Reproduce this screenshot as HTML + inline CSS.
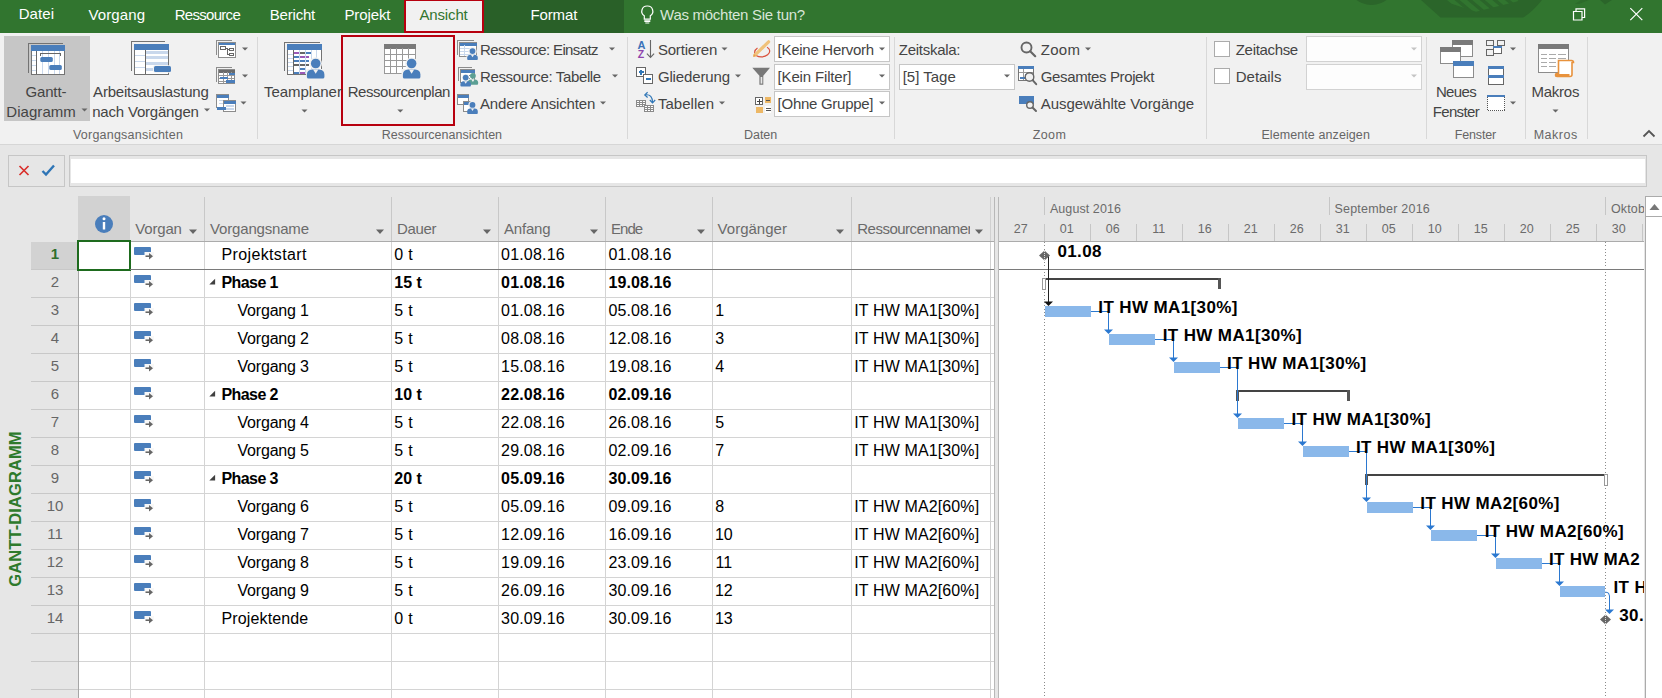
<!DOCTYPE html><html lang="de"><head><meta charset="utf-8"><title>Project</title><style>
html,body{margin:0;padding:0}
body{width:1662px;height:698px;overflow:hidden;position:relative;background:#e6e6e6;font-family:"Liberation Sans",sans-serif}
.a{position:absolute}
.t{position:absolute;white-space:nowrap;line-height:20px;height:20px;font-family:"Liberation Sans",sans-serif;}
.sep{position:absolute;top:37px;height:102px;width:1px;background:#d8d8d8}
.cb{position:absolute;height:24px;background:#fff;border:1px solid #c6c6c6}
.vl{position:absolute;width:1px;background:#d4d4d4}
.hl{position:absolute;height:1px;background:#d4d4d4}
</style></head><body>
<div class="a" style="left:0;top:0;width:1662px;height:33px;background:#31752f"></div>
<div class="a" style="left:484px;top:0;width:140px;height:33px;background:#296028"></div>
<div class="a" style="left:404px;top:-1px;width:76px;height:30px;background:#f1f1f1;border:2px solid #b7000f"></div>
<div class="a" style="left:0;top:33px;width:1662px;height:111px;background:#f1f1f1"></div>
<div class="a" style="left:0;top:144px;width:1662px;height:1px;background:#d6d6d6"></div>
<div class="a" style="left:4px;top:36px;width:86px;height:85px;background:#c6c6c6"></div>
<div class="sep" style="left:257px"></div>
<div class="sep" style="left:627px"></div>
<div class="sep" style="left:894px"></div>
<div class="sep" style="left:1206px"></div>
<div class="sep" style="left:1426px"></div>
<div class="sep" style="left:1525px"></div>
<div class="sep" style="left:1587px"></div>
<div class="a" style="left:341px;top:35px;width:110px;height:87px;border:2px solid #b7000f;background:#f1f1f1"></div>
<div class="cb" style="left:774px;top:36px;width:114px"></div>
<div class="cb" style="left:774px;top:64px;width:114px"></div>
<div class="cb" style="left:774px;top:91px;width:114px"></div>
<div class="cb" style="left:899px;top:64px;width:114px"></div>
<div class="cb" style="left:1306px;top:36px;width:114px;background:#fdfdfd;border-color:#d2d2d2"></div>
<div class="cb" style="left:1306px;top:64px;width:114px;background:#fdfdfd;border-color:#d2d2d2"></div>
<div class="a" style="left:1214px;top:41px;width:14px;height:14px;background:#fff;border:1px solid #ababab"></div>
<div class="a" style="left:1214px;top:68px;width:14px;height:14px;background:#fff;border:1px solid #ababab"></div>
<div class="a" style="left:8px;top:155px;width:55px;height:30px;border:1px solid #c6c6c6"></div>
<div class="a" style="left:69px;top:155px;width:1576px;height:30px;border:1px solid #c6c6c6"><div class="a" style="left:1px;top:3px;right:1px;bottom:3px;background:#fff"></div></div>
<div class="a" style="left:78px;top:242px;width:916px;height:456px;background:#fff"></div>
<div class="a" style="left:999px;top:242px;width:645px;height:456px;background:#fff"></div>
<div class="a" style="left:78px;top:196px;width:52px;height:45px;background:#d2d2d2"></div>
<div class="a" style="left:31px;top:242px;width:47px;height:27px;background:#d2d2d2"></div>
<div class="hl" style="left:31px;top:269px;width:47px;background:#c8c8c8"></div><div class="hl" style="left:78px;top:269px;width:916px"></div>
<div class="hl" style="left:31px;top:297px;width:47px;background:#c8c8c8"></div><div class="hl" style="left:78px;top:297px;width:916px"></div>
<div class="hl" style="left:31px;top:325px;width:47px;background:#c8c8c8"></div><div class="hl" style="left:78px;top:325px;width:916px"></div>
<div class="hl" style="left:31px;top:353px;width:47px;background:#c8c8c8"></div><div class="hl" style="left:78px;top:353px;width:916px"></div>
<div class="hl" style="left:31px;top:381px;width:47px;background:#c8c8c8"></div><div class="hl" style="left:78px;top:381px;width:916px"></div>
<div class="hl" style="left:31px;top:409px;width:47px;background:#c8c8c8"></div><div class="hl" style="left:78px;top:409px;width:916px"></div>
<div class="hl" style="left:31px;top:437px;width:47px;background:#c8c8c8"></div><div class="hl" style="left:78px;top:437px;width:916px"></div>
<div class="hl" style="left:31px;top:465px;width:47px;background:#c8c8c8"></div><div class="hl" style="left:78px;top:465px;width:916px"></div>
<div class="hl" style="left:31px;top:493px;width:47px;background:#c8c8c8"></div><div class="hl" style="left:78px;top:493px;width:916px"></div>
<div class="hl" style="left:31px;top:521px;width:47px;background:#c8c8c8"></div><div class="hl" style="left:78px;top:521px;width:916px"></div>
<div class="hl" style="left:31px;top:549px;width:47px;background:#c8c8c8"></div><div class="hl" style="left:78px;top:549px;width:916px"></div>
<div class="hl" style="left:31px;top:577px;width:47px;background:#c8c8c8"></div><div class="hl" style="left:78px;top:577px;width:916px"></div>
<div class="hl" style="left:31px;top:605px;width:47px;background:#c8c8c8"></div><div class="hl" style="left:78px;top:605px;width:916px"></div>
<div class="hl" style="left:31px;top:633px;width:47px;background:#c8c8c8"></div><div class="hl" style="left:78px;top:633px;width:916px"></div>
<div class="hl" style="left:31px;top:661px;width:47px;background:#c8c8c8"></div><div class="hl" style="left:78px;top:661px;width:916px"></div>
<div class="hl" style="left:31px;top:689px;width:47px;background:#c8c8c8"></div><div class="hl" style="left:78px;top:689px;width:916px"></div>
<div class="vl" style="left:130px;top:242px;height:456px"></div>
<div class="vl" style="left:204px;top:197px;height:44px;background:#c8c8c8"></div>
<div class="vl" style="left:204px;top:242px;height:456px"></div>
<div class="vl" style="left:391px;top:197px;height:44px;background:#c8c8c8"></div>
<div class="vl" style="left:391px;top:242px;height:456px"></div>
<div class="vl" style="left:498px;top:197px;height:44px;background:#c8c8c8"></div>
<div class="vl" style="left:498px;top:242px;height:456px"></div>
<div class="vl" style="left:605px;top:197px;height:44px;background:#c8c8c8"></div>
<div class="vl" style="left:605px;top:242px;height:456px"></div>
<div class="vl" style="left:712px;top:197px;height:44px;background:#c8c8c8"></div>
<div class="vl" style="left:712px;top:242px;height:456px"></div>
<div class="vl" style="left:851px;top:197px;height:44px;background:#c8c8c8"></div>
<div class="vl" style="left:851px;top:242px;height:456px"></div>
<div class="vl" style="left:78px;top:241px;height:457px;background:#a6a6a6"></div>
<div class="vl" style="left:990px;top:197px;height:501px;background:#d0d0d0"></div>
<div class="a" style="left:994px;top:197px;width:3px;height:501px;background:#e6e6e6;border-left:1px solid #b8b8b8;border-right:1px solid #b8b8b8"></div>
<div class="hl" style="left:78px;top:241px;width:916px;background:#ababab"></div><div class="hl" style="left:999px;top:241px;width:645px;background:#ababab"></div>
<div class="vl" style="left:1044px;top:197px;height:18px;background:#c6c6c6"></div>
<div class="vl" style="left:1329px;top:197px;height:18px;background:#c6c6c6"></div>
<div class="vl" style="left:1605px;top:197px;height:18px;background:#c6c6c6"></div>
<div class="vl" style="left:1044px;top:224px;height:17px;background:#c6c6c6"></div>
<div class="vl" style="left:1090px;top:224px;height:17px;background:#c6c6c6"></div>
<div class="vl" style="left:1136px;top:224px;height:17px;background:#c6c6c6"></div>
<div class="vl" style="left:1182px;top:224px;height:17px;background:#c6c6c6"></div>
<div class="vl" style="left:1228px;top:224px;height:17px;background:#c6c6c6"></div>
<div class="vl" style="left:1274px;top:224px;height:17px;background:#c6c6c6"></div>
<div class="vl" style="left:1320px;top:224px;height:17px;background:#c6c6c6"></div>
<div class="vl" style="left:1366px;top:224px;height:17px;background:#c6c6c6"></div>
<div class="vl" style="left:1412px;top:224px;height:17px;background:#c6c6c6"></div>
<div class="vl" style="left:1458px;top:224px;height:17px;background:#c6c6c6"></div>
<div class="vl" style="left:1504px;top:224px;height:17px;background:#c6c6c6"></div>
<div class="vl" style="left:1550px;top:224px;height:17px;background:#c6c6c6"></div>
<div class="vl" style="left:1596px;top:224px;height:17px;background:#c6c6c6"></div>
<div class="vl" style="left:1642px;top:224px;height:17px;background:#c6c6c6"></div>
<div class="a" style="left:1645px;top:197px;width:17px;height:501px;background:#fff;border-left:1px solid #ababab"></div>
<div class="a" style="left:1645px;top:196px;width:17px;height:19px;background:#fff;border:1px solid #ababab;border-right:0"></div>
<div class="a" style="left:77px;top:240px;width:50px;height:27px;border:2px solid #1e6b1e;background:#fff"></div>
<div class="a" style="left:15px;top:509px;width:0;height:0"><div id="vlab" style="position:absolute;white-space:nowrap;transform:translate(-50%,-50%) rotate(-90deg);font-size:16.5px;font-weight:700;color:#2e7a2c;letter-spacing:0.1px;line-height:16px">GANTT-DIAGRAMM</div></div>
<svg class="a" style="left:0;top:0" width="1662" height="698" viewBox="0 0 1662 698">
<path d="M1421,0 L1440.5,17.5 h82.5 q9,-5 19,-17.5 z" fill="#2b652a"/><circle cx="1371.5" cy="-20" r="25" fill="#2b652a"/><clipPath id="dc"><path d="M1440,0 L1476,11.8 L1517,1.6 L1520,0 z"/></clipPath><g clip-path="url(#dc)"><path d="M1447.0,0 h7.5 l14.2,12 h-7.5 z" fill="#31752f"/><path d="M1459.6,0 h7.5 l14.2,12 h-7.5 z" fill="#31752f"/><path d="M1472.2,0 h7.5 l14.2,12 h-7.5 z" fill="#31752f"/><path d="M1484.8,0 h7.5 l14.2,12 h-7.5 z" fill="#31752f"/><path d="M1497.4,0 h7.5 l14.2,12 h-7.5 z" fill="#31752f"/><path d="M1510.0,0 h7.5 l14.2,12 h-7.5 z" fill="#31752f"/></g><path d="M1600,0 h12 l-7,4.5 z" fill="#2b652a"/><path d="M1581,0 h8 l-10,4 h-4z" fill="#2d6b2b"/>
<g shape-rendering="crispEdges">
<line x1="28.5" y1="43" x2="28.5" y2="73" stroke="#737373" stroke-width="1" /><line x1="28" y1="43.5" x2="63" y2="43.5" stroke="#737373" stroke-width="1" />
<rect x="31.5" y="45.5" width="33" height="29" fill="#fff" stroke="#737373"/>
<rect x="31" y="45" width="34" height="6" fill="#4a7ebb" />
<line x1="32" y1="55.5" x2="36" y2="55.5" stroke="#c9d8ec" stroke-width="1" />
<line x1="32" y1="60.5" x2="36" y2="60.5" stroke="#c9d8ec" stroke-width="1" />
<line x1="32" y1="65.5" x2="36" y2="65.5" stroke="#c9d8ec" stroke-width="1" />
<line x1="32" y1="70.5" x2="36" y2="70.5" stroke="#c9d8ec" stroke-width="1" />
<line x1="42.5" y1="51" x2="42.5" y2="74" stroke="#c9d8ec" stroke-width="1" />
<line x1="48.5" y1="51" x2="48.5" y2="74" stroke="#c9d8ec" stroke-width="1" />
<line x1="54.5" y1="51" x2="54.5" y2="74" stroke="#c9d8ec" stroke-width="1" />
<line x1="59.5" y1="51" x2="59.5" y2="74" stroke="#c9d8ec" stroke-width="1" />
<line x1="36.5" y1="51" x2="36.5" y2="74" stroke="#666" stroke-width="1" />
<path d="M40.5,55.5 v-2 h20 v2" fill="none" stroke="#666"/>
</g>
<rect x="40.3" y="57" width="12.5" height="5" fill="#4a7ebb" rx="1.5"/><rect x="49.3" y="65" width="12.5" height="5" fill="#4a7ebb" rx="1.5"/>
<g shape-rendering="crispEdges">
<line x1="131.5" y1="41" x2="131.5" y2="71" stroke="#737373" stroke-width="1" /><line x1="131" y1="41.5" x2="165" y2="41.5" stroke="#737373" stroke-width="1" />
<rect x="134.5" y="44.5" width="34" height="30" fill="#fff" stroke="#737373"/>
<rect x="134" y="44" width="35" height="6" fill="#4a7ebb" />
<line x1="145.5" y1="50" x2="145.5" y2="74" stroke="#666" stroke-width="1" />
<line x1="135" y1="55.5" x2="145" y2="55.5" stroke="#c9d8ec" stroke-width="1" />
<line x1="135" y1="61.5" x2="145" y2="61.5" stroke="#c9d8ec" stroke-width="1" />
<line x1="135" y1="67.5" x2="145" y2="67.5" stroke="#c9d8ec" stroke-width="1" />
<rect x="146" y="50.5" width="22" height="3" fill="#c9d8ec" />
<rect x="146" y="56" width="22" height="3" fill="#c9d8ec" />
<rect x="146" y="62" width="22" height="3" fill="#c9d8ec" />
<rect x="146" y="68" width="7" height="3" fill="#c9d8ec" />
</g>
<rect x="153.2" y="65.2" width="18.4" height="7.6" fill="#f1f1f1" rx="2"/><rect x="154" y="66" width="17" height="6" fill="#4a7ebb" rx="1.5"/>
<g shape-rendering="crispEdges">
<line x1="216.5" y1="40" x2="216.5" y2="55" stroke="#8c8c8c" stroke-width="1" /><line x1="216" y1="40.5" x2="232" y2="40.5" stroke="#8c8c8c" stroke-width="1" />
<rect x="218.5" y="42.5" width="17" height="15" fill="#fff" stroke="#8c8c8c"/><rect x="219" y="43" width="16" height="2" fill="#4a7ebb" />
<rect x="220.5" y="46.5" width="5" height="3" fill="#fff" stroke="#666"/><rect x="229.5" y="48.5" width="4" height="2" fill="#fff" stroke="#666"/><rect x="229.5" y="53.5" width="4" height="2" fill="#fff" stroke="#666"/>
<path d="M225.5,48.5 h2 v6 h2 M227.5,49.5 h2" fill="none" stroke="#666"/>
<line x1="216.5" y1="67" x2="216.5" y2="82" stroke="#8c8c8c" stroke-width="1" /><line x1="216" y1="67.5" x2="232" y2="67.5" stroke="#8c8c8c" stroke-width="1" />
<rect x="218.5" y="69.5" width="16" height="14" fill="#fff" stroke="#8c8c8c"/><rect x="219" y="70" width="16" height="2.5" fill="#6a6a6a" />
<line x1="223.5" y1="72" x2="223.5" y2="83" stroke="#999" stroke-width="1" />
<line x1="227.5" y1="72" x2="227.5" y2="83" stroke="#999" stroke-width="1" />
<line x1="231.5" y1="72" x2="231.5" y2="83" stroke="#999" stroke-width="1" />
<line x1="219" y1="75.5" x2="234" y2="75.5" stroke="#999" stroke-width="1" />
<line x1="219" y1="78.5" x2="234" y2="78.5" stroke="#999" stroke-width="1" />
<line x1="219" y1="81.5" x2="234" y2="81.5" stroke="#999" stroke-width="1" />
<rect x="229" y="73" width="6" height="2" fill="#4a7ebb" /><rect x="220" y="77" width="8" height="2" fill="#4a7ebb" /><rect x="226" y="80" width="9" height="2.5" fill="#4a7ebb" />
<rect x="216.5" y="94.5" width="12" height="13" fill="#fff" stroke="#8c8c8c"/><rect x="217" y="95" width="12" height="2.5" fill="#4a7ebb" />
<line x1="219" y1="100.5" x2="227" y2="100.5" stroke="#c9d8ec" stroke-width="1" />
<line x1="219" y1="103.5" x2="227" y2="103.5" stroke="#c9d8ec" stroke-width="1" />
<rect x="223.5" y="100.5" width="12" height="11" fill="#fff" stroke="#8c8c8c"/><rect x="224" y="101" width="12" height="2.5" fill="#4a7ebb" />
<rect x="226" y="105" width="8" height="1.5" fill="#c9d8ec" /><rect x="226" y="108" width="8" height="1.5" fill="#c9d8ec" />
<rect x="217" y="107" width="8.5" height="3" fill="#4a7ebb" />
</g>
<path d="M242,47.5 h6 l-3.0,3 z" fill="#666"/><path d="M242,74.5 h6 l-3.0,3 z" fill="#666"/><path d="M240.5,101.5 h6 l-3.0,3 z" fill="#666"/>
<path d="M81.5,108.5 h6 l-3.0,3 z" fill="#666"/><path d="M204,108.5 h6 l-3.0,3 z" fill="#666"/><path d="M301.5,109.5 h6 l-3.0,3 z" fill="#666"/><path d="M397.3,109.5 h6 l-3.0,3 z" fill="#666"/><path d="M1552.5,109.5 h6 l-3.0,3 z" fill="#666"/>
<g shape-rendering="crispEdges">
<line x1="284.5" y1="42" x2="284.5" y2="71" stroke="#737373" stroke-width="1" /><line x1="284" y1="42.5" x2="320" y2="42.5" stroke="#737373" stroke-width="1" />
<rect x="287.5" y="44.5" width="34" height="30" fill="#fff" stroke="#737373"/><rect x="287" y="44" width="35" height="6" fill="#4a7ebb" />
<line x1="288" y1="54.5" x2="293" y2="54.5" stroke="#c9d8ec" stroke-width="1" />
<line x1="288" y1="58.5" x2="293" y2="58.5" stroke="#c9d8ec" stroke-width="1" />
<line x1="288" y1="62.5" x2="293" y2="62.5" stroke="#c9d8ec" stroke-width="1" />
<line x1="288" y1="66.5" x2="293" y2="66.5" stroke="#c9d8ec" stroke-width="1" />
<line x1="288" y1="70.5" x2="293" y2="70.5" stroke="#c9d8ec" stroke-width="1" />
<line x1="299.5" y1="50" x2="299.5" y2="74" stroke="#c9d8ec" stroke-width="1" />
<line x1="305.5" y1="50" x2="305.5" y2="74" stroke="#c9d8ec" stroke-width="1" />
<line x1="311.5" y1="50" x2="311.5" y2="74" stroke="#c9d8ec" stroke-width="1" />
<line x1="316.5" y1="50" x2="316.5" y2="74" stroke="#c9d8ec" stroke-width="1" />
<line x1="293.5" y1="50" x2="293.5" y2="74" stroke="#666" stroke-width="1" />
<rect x="294" y="52" width="5" height="2" fill="#9b59b6" /><rect x="300" y="52" width="5" height="2" fill="#666" /><rect x="306" y="52" width="5" height="2" fill="#4a7ebb" />
<rect x="294" y="56" width="5" height="2" fill="#4a7ebb" /><rect x="300" y="56" width="5" height="2" fill="#9b59b6" /><rect x="306" y="56" width="3" height="2" fill="#9b59b6" />
<rect x="294" y="60" width="5" height="2" fill="#4a7ebb" /><rect x="300" y="60" width="5" height="2" fill="#4a7ebb" /><rect x="306" y="60" width="3" height="2" fill="#4a7ebb" />
<rect x="294" y="64" width="5" height="2" fill="#666" /><rect x="300" y="64" width="5" height="2" fill="#666" /><rect x="306" y="64" width="3" height="2" fill="#666" />
<rect x="300" y="68" width="5" height="2" fill="#4a7ebb" />
<rect x="294" y="72" width="5" height="2" fill="#4a7ebb" /><rect x="300" y="72" width="5" height="2" fill="#9b59b6" />
</g>
<circle cx="315.7" cy="63.5" r="6.3" fill="#f1f1f1"/><rect x="306" y="69" width="19.5" height="10.5" fill="#f1f1f1" rx="2"/>
<path d="M306.9,76.9 Q306.9,78.5 308.6,78.5 H322.8 Q324.4,78.5 324.4,76.9 V74.5 Q324.4,70.1 319.2,69.5 H312.2 Q306.9,70.1 306.9,74.5 z" fill="#4a7ebb"/><path d="M313.1,69.5 L315.7,73.7 L318.3,69.5 z" fill="#f1f1f1"/><circle cx="315.7" cy="63.5" r="4.8" fill="#4a7ebb"/>
<g shape-rendering="crispEdges">
<rect x="384.5" y="44.5" width="31" height="28.5" fill="#fff" stroke="#999"/><rect x="384" y="44" width="32" height="4.5" fill="#7a7a7a" />
<line x1="390.5" y1="48" x2="390.5" y2="73" stroke="#999" stroke-width="1" />
<line x1="396.5" y1="48" x2="396.5" y2="73" stroke="#999" stroke-width="1" />
<line x1="402.5" y1="48" x2="402.5" y2="73" stroke="#999" stroke-width="1" />
<line x1="408.5" y1="48" x2="408.5" y2="73" stroke="#999" stroke-width="1" />
<line x1="384" y1="54.5" x2="415" y2="54.5" stroke="#999" stroke-width="1" />
<line x1="384" y1="60.5" x2="415" y2="60.5" stroke="#999" stroke-width="1" />
<line x1="384" y1="66.5" x2="415" y2="66.5" stroke="#999" stroke-width="1" />
</g>
<circle cx="411.6" cy="64" r="6.5" fill="#f1f1f1"/><rect x="401.5" y="69" width="20" height="10" fill="#f1f1f1" />
<path d="M402.9,76.9 Q402.9,78.5 404.5,78.5 H418.8 Q420.4,78.5 420.4,76.9 V74.5 Q420.4,70.1 415.1,69.5 H408.1 Q402.9,70.1 402.9,74.5 z" fill="#4a7ebb"/><path d="M409.0,69.5 L411.6,73.7 L414.2,69.5 z" fill="#f1f1f1"/><circle cx="411.6" cy="63.5" r="4.8" fill="#4a7ebb"/>
<g shape-rendering="crispEdges">
<line x1="457.5" y1="40" x2="457.5" y2="55" stroke="#8c8c8c" stroke-width="1" /><line x1="457" y1="40.5" x2="474" y2="40.5" stroke="#8c8c8c" stroke-width="1" />
<rect x="459.5" y="42.5" width="17" height="14" fill="#fff" stroke="#8c8c8c"/><rect x="460" y="43" width="17" height="2.5" fill="#4a7ebb" />
<line x1="464.5" y1="45" x2="464.5" y2="56" stroke="#c9d8ec" stroke-width="1" />
<line x1="460" y1="48.5" x2="470" y2="48.5" stroke="#c9d8ec" stroke-width="1" />
<line x1="460" y1="51.5" x2="470" y2="51.5" stroke="#c9d8ec" stroke-width="1" />
<line x1="460" y1="54.5" x2="470" y2="54.5" stroke="#c9d8ec" stroke-width="1" />
</g>
<circle cx="472.5" cy="51.5" r="4.2" fill="#f1f1f1"/><rect x="466.5" y="55" width="12" height="5" fill="#f1f1f1" />
<path d="M467.2,59.1 Q467.2,60.1 468.2,60.1 H476.8 Q477.8,60.1 477.8,59.1 V57.7 Q477.8,55.0 474.6,54.7 H470.4 Q467.2,55.0 467.2,57.7 z" fill="#4a7ebb"/><path d="M470.9,54.7 L472.5,57.2 L474.1,54.7 z" fill="#f1f1f1"/><circle cx="472.5" cy="51.1" r="2.9" fill="#4a7ebb"/>
<g shape-rendering="crispEdges">
<line x1="458.5" y1="67" x2="458.5" y2="81" stroke="#8c8c8c" stroke-width="1" /><line x1="458" y1="67.5" x2="472" y2="67.5" stroke="#8c8c8c" stroke-width="1" />
<rect x="460.5" y="69.5" width="14" height="13" fill="#fff" stroke="#8c8c8c"/><rect x="461" y="70" width="14" height="2.5" fill="#4a7ebb" />
<rect x="463" y="75" width="1" height="1" fill="#888" />
<rect x="463" y="78" width="1" height="1" fill="#888" />
<rect x="466" y="75" width="1" height="1" fill="#888" />
<rect x="466" y="78" width="1" height="1" fill="#888" />
<rect x="469" y="75" width="1" height="1" fill="#888" />
<rect x="469" y="78" width="1" height="1" fill="#888" />
<rect x="472" y="75" width="1" height="1" fill="#888" />
<rect x="472" y="78" width="1" height="1" fill="#888" />
</g>
<path d="M467.6,83.8 Q467.6,84.8 468.6,84.8 H477.2 Q478.1,84.8 478.1,83.8 V82.3 Q478.1,79.7 475.0,79.4 H470.8 Q467.6,79.7 467.6,82.3 z" fill="#5b9f94"/><path d="M471.3,79.4 L472.9,81.9 L474.5,79.4 z" fill="#f1f1f1"/><circle cx="472.9" cy="75.8" r="2.9" fill="#5b9f94"/>
<circle cx="465.7" cy="77.6" r="3.6" fill="#f1f1f1"/>
<path d="M460.4,85.6 Q460.4,86.6 461.4,86.6 H470.0 Q470.9,86.6 470.9,85.6 V84.1 Q470.9,81.5 467.8,81.2 H463.6 Q460.4,81.5 460.4,84.1 z" fill="#4a7ebb"/><path d="M464.1,81.2 L465.7,83.7 L467.3,81.2 z" fill="#f1f1f1"/><circle cx="465.7" cy="77.6" r="2.9" fill="#4a7ebb"/>
<g shape-rendering="crispEdges">
<rect x="457.5" y="94.5" width="11" height="10" fill="#fff" stroke="#8c8c8c"/><rect x="458" y="95" width="11" height="2.5" fill="#4a7ebb" />
<rect x="463.5" y="101.5" width="10" height="10" fill="#fff" stroke="#8c8c8c"/><rect x="464" y="102" width="10" height="2.5" fill="#4a7ebb" />
</g>
<circle cx="472.5" cy="105" r="4.2" fill="#f1f1f1"/>
<path d="M467.2,112.9 Q467.2,113.9 468.2,113.9 H476.8 Q477.8,113.9 477.8,112.9 V111.4 Q477.8,108.8 474.6,108.5 H470.4 Q467.2,108.8 467.2,111.4 z" fill="#4a7ebb"/><path d="M470.9,108.5 L472.5,111.0 L474.1,108.5 z" fill="#f1f1f1"/><circle cx="472.5" cy="104.9" r="2.9" fill="#4a7ebb"/>
<path d="M609,47.5 h6 l-3.0,3 z" fill="#666"/><path d="M612,74.5 h6 l-3.0,3 z" fill="#666"/><path d="M600,101.5 h6 l-3.0,3 z" fill="#666"/>
<text x="637.4" y="48.7" font-family="Liberation Sans,sans-serif" font-size="11" font-weight="700" fill="#3b73b9">A</text>
<text x="637.8" y="57.8" font-family="Liberation Sans,sans-serif" font-size="10.5" font-weight="700" fill="#8e44ad">Z</text>
<path d="M650.5,40 v17 M646.9,53.6 l3.6,3.8 l3.6,-3.8" fill="none" stroke="#666" stroke-width="1.1"/>
<g shape-rendering="crispEdges">
<rect x="636.5" y="67.5" width="9" height="9" fill="#fff" stroke="#666"/><rect x="638.5" y="71.2" width="5" height="1.8" fill="#2e75b6" /><rect x="640.1" y="69.5" width="1.8" height="5" fill="#2e75b6" />
<rect x="643.5" y="74.5" width="9" height="9" fill="#fff" stroke="#666"/><rect x="645.5" y="78.3" width="5.5" height="1.8" fill="#2e75b6" />
<rect x="636.5" y="100.5" width="9" height="6" fill="#fff" stroke="#8a8a8a"/><line x1="636" y1="102.5" x2="646" y2="102.5" stroke="#8a8a8a" stroke-width="1" /><line x1="636" y1="104.5" x2="646" y2="104.5" stroke="#8a8a8a" stroke-width="1" /><line x1="639.5" y1="100" x2="639.5" y2="107" stroke="#8a8a8a" stroke-width="1" /><line x1="642.5" y1="100" x2="642.5" y2="107" stroke="#8a8a8a" stroke-width="1" />
<rect x="644.5" y="105.5" width="9" height="6" fill="#fff" stroke="#8a8a8a"/><line x1="644" y1="107.5" x2="654" y2="107.5" stroke="#8a8a8a" stroke-width="1" /><line x1="644" y1="109.5" x2="654" y2="109.5" stroke="#8a8a8a" stroke-width="1" /><line x1="647.5" y1="105" x2="647.5" y2="112" stroke="#8a8a8a" stroke-width="1" /><line x1="650.5" y1="105" x2="650.5" y2="112" stroke="#8a8a8a" stroke-width="1" />
</g>
<path d="M645.5,94.8 q7,-0.8 7,7.6" fill="none" stroke="#2e75b6" stroke-width="1.2"/>
<path d="M647.6,92.3 l-2.8,2.6 l2.8,2.6 M649.8,100 l2.7,2.8 l2.7,-2.8" fill="none" stroke="#2e75b6" stroke-width="1.2"/>
<path d="M721.5,47.5 h6 l-3.0,3 z" fill="#666"/><path d="M735,74.5 h6 l-3.0,3 z" fill="#666"/><path d="M719,101.5 h6 l-3.0,3 z" fill="#666"/>
<path d="M757.5,48 a7.6,5.2 -10 1 0 9.5,-0.8" fill="none" stroke="#d9513c" stroke-width="1.2"/>
<path d="M754.8,55.2 L768.6,41.8" stroke="#f0c27a" stroke-width="3.2" stroke-linecap="round"/><path d="M753,57 l1,-3 l2,2 z" fill="#e8a04c"/>
<path d="M752.3,67.8 h17.7 l-6.7,8 v9 h-3.9 v-9 z" fill="#787878"/><path d="M760.6,77 h1.7 v6.6 h-1.7 z" fill="#e8e8e8"/>
<g shape-rendering="crispEdges">
<rect x="755.5" y="97.5" width="7" height="7" fill="#fff" stroke="#666"/><line x1="757" y1="101" x2="762" y2="101" stroke="#444" stroke-width="1" /><line x1="759.5" y1="99" x2="759.5" y2="104" stroke="#444" stroke-width="1" />
<rect x="765" y="97" width="6" height="5.5" fill="#edb866" /><rect x="756" y="106.5" width="6.5" height="6" fill="#edb866" /><rect x="765" y="105.5" width="6" height="7.5" fill="#fff" />
<line x1="766" y1="100" x2="770" y2="100" stroke="#555" stroke-width="1" /><line x1="766" y1="108.5" x2="771" y2="108.5" stroke="#555" stroke-width="1" /><line x1="766" y1="110.5" x2="771" y2="110.5" stroke="#555" stroke-width="1" />
</g>
<path d="M879,47.5 h6 l-3.0,3 z" fill="#666"/><path d="M879,74.5 h6 l-3.0,3 z" fill="#666"/><path d="M879,101.5 h6 l-3.0,3 z" fill="#666"/><path d="M1004,74.5 h6 l-3.0,3 z" fill="#666"/>
<circle cx="1026.5" cy="47.5" r="5" fill="none" stroke="#666" stroke-width="1.9"/><path d="M1030.2,51.2 l5,5" stroke="#666" stroke-width="2.2" stroke-linecap="round"/>
<g shape-rendering="crispEdges">
<rect x="1018.5" y="66.5" width="15" height="14" fill="#fff" stroke="#777"/><rect x="1018" y="66" width="16" height="3" fill="#4a7ebb" />
<line x1="1023.5" y1="69" x2="1023.5" y2="80" stroke="#999" stroke-width="1" /><line x1="1019" y1="72.5" x2="1033" y2="72.5" stroke="#999" stroke-width="1" /><rect x="1025" y="74" width="5" height="1.6" fill="#4a7ebb" /><rect x="1020" y="77" width="5" height="1.6" fill="#4a7ebb" />
</g>
<circle cx="1029.5" cy="77" r="4.3" fill="#f1f1f1" stroke="#666" stroke-width="1.4"/><path d="M1032.6,80.2 l3.6,4" stroke="#666" stroke-width="2" stroke-linecap="round"/>
<rect x="1019" y="96" width="15" height="7.5" fill="#4a7ebb" shape-rendering="crispEdges"/>
<circle cx="1030" cy="105" r="3.3" fill="#f1f1f1" stroke="#666" stroke-width="1.4"/><path d="M1032.5,107.5 l3.5,3.5" stroke="#666" stroke-width="2" stroke-linecap="round"/>
<path d="M1085,47.5 h6 l-3.0,3 z" fill="#666"/>
<path d="M1411,47.5 h6 l-3.0,3 z" fill="#c4c4c4"/><path d="M1411,74.5 h6 l-3.0,3 z" fill="#c4c4c4"/>
<g shape-rendering="crispEdges">
<rect x="1452.5" y="40.5" width="20" height="16" fill="#fff" stroke="#8c8c8c"/><rect x="1452" y="40" width="21" height="5" fill="#7a7a7a" />
<rect x="1440.5" y="47.5" width="20" height="16" fill="#fff" stroke="#8c8c8c"/><rect x="1440" y="47" width="21" height="5" fill="#7a7a7a" />
<rect x="1453.5" y="61.5" width="20" height="16" fill="#fff" stroke="#8c8c8c"/><rect x="1453" y="61" width="21" height="4.5" fill="#4a7ebb" />
<rect x="1486.5" y="40.5" width="7" height="5" fill="none" stroke="#666"/><rect x="1497.5" y="40.5" width="7" height="5" fill="none" stroke="#666"/><rect x="1486.5" y="49.5" width="7" height="6" fill="none" stroke="#666"/>
<rect x="1493.5" y="46.5" width="8" height="7" fill="#fff" stroke="#666"/><rect x="1493" y="46" width="9" height="2" fill="#4a7ebb" />
<rect x="1488.5" y="66.5" width="15" height="9" fill="#fff" stroke="#666"/><rect x="1488" y="66" width="16" height="2.5" fill="#4a7ebb" /><rect x="1488.5" y="75.5" width="15" height="9" fill="#fff" stroke="#666"/><rect x="1488" y="75" width="16" height="2.5" fill="#4a7ebb" />
<rect x="1487.5" y="95.5" width="17" height="15" fill="#fff" stroke="#555" stroke-dasharray="1,1"/><rect x="1487" y="94.5" width="18" height="2.5" fill="#4a7ebb" />
<rect x="1538.5" y="44.5" width="30" height="28" fill="#fff" stroke="#8c8c8c"/><rect x="1538" y="44" width="31" height="5" fill="#7a7a7a" />
<line x1="1541" y1="54.5" x2="1547" y2="54.5" stroke="#aaa" stroke-width="1" /><line x1="1549" y1="54.5" x2="1556" y2="54.5" stroke="#aaa" stroke-width="1" /><line x1="1558" y1="54.5" x2="1566" y2="54.5" stroke="#aaa" stroke-width="1" />
<line x1="1541" y1="58.5" x2="1547" y2="58.5" stroke="#aaa" stroke-width="1" /><line x1="1549" y1="58.5" x2="1556" y2="58.5" stroke="#aaa" stroke-width="1" /><line x1="1558" y1="58.5" x2="1566" y2="58.5" stroke="#aaa" stroke-width="1" />
<line x1="1541" y1="62.5" x2="1547" y2="62.5" stroke="#aaa" stroke-width="1" /><line x1="1549" y1="62.5" x2="1556" y2="62.5" stroke="#aaa" stroke-width="1" /><line x1="1558" y1="62.5" x2="1566" y2="62.5" stroke="#aaa" stroke-width="1" />
<line x1="1541" y1="66.5" x2="1547" y2="66.5" stroke="#aaa" stroke-width="1" /><line x1="1549" y1="66.5" x2="1556" y2="66.5" stroke="#aaa" stroke-width="1" /><line x1="1558" y1="66.5" x2="1566" y2="66.5" stroke="#aaa" stroke-width="1" />
</g>
<path d="M1558.5,60.5 h13 q2,0 2,2 h-1.5 v12 q0,2 -2,2 h-13 q-1.5,0 -1.5,-1.5 q0,-1.5 1.5,-1.5 h1.5 z" fill="#fff" stroke="#e8923c" stroke-width="1.6"/>
<path d="M1555.5,74 h14 v2.5 h-14 z" fill="#e8923c"/>
<path d="M1510,47.5 h6 l-3.0,3 z" fill="#666"/><path d="M1510,101.5 h6 l-3.0,3 z" fill="#666"/>
<path d="M1643.5,136.5 l5.5,-5.5 l5.5,5.5" fill="none" stroke="#555" stroke-width="1.8"/>
<path d="M647.3,6 a5.3,5.3 0 0 1 3,9.8 v3.4 h-6 v-3.4 a5.3,5.3 0 0 1 3,-9.8 z" fill="none" stroke="#fff" stroke-width="1.2"/><path d="M644.3,20.2 h6 v1.8 h-6z M645.3,22.6 h4 v1 h-4z" fill="#fff"/>
<path d="M1573.5,11.5 h8.5 v8.5 h-8.5 z M1576,11.5 v-2.6 h8.6 v8.6 h-2.6" fill="none" stroke="#fff" stroke-width="1.2"/>
<path d="M1630.3,8.2 l12,12 M1642.3,8.2 l-12,12" stroke="#fff" stroke-width="1.2"/>
<path d="M19.5,166 l9,9 M28.5,166 l-9,9" stroke="#d9302c" stroke-width="1.7"/>
<path d="M42.5,171 l3.5,3.5 l8,-9" fill="none" stroke="#2e75b6" stroke-width="2.4"/>
<path d="M189,229.5 h8 l-4,4.5 z" fill="#666"/>
<path d="M376,229.5 h8 l-4,4.5 z" fill="#666"/>
<path d="M483,229.5 h8 l-4,4.5 z" fill="#666"/>
<path d="M590,229.5 h8 l-4,4.5 z" fill="#666"/>
<path d="M697,229.5 h8 l-4,4.5 z" fill="#666"/>
<path d="M836,229.5 h8 l-4,4.5 z" fill="#666"/>
<path d="M975,229.5 h8 l-4,4.5 z" fill="#666"/>
<path d="M1649.5,210 h10 l-5,-6 z" fill="#777"/>
<circle cx="104" cy="224" r="9" fill="#4a7ebb"/><rect x="102.8" y="222" width="2.4" height="7.5" fill="#fff"/><circle cx="104" cy="218.8" r="1.5" fill="#fff"/>
<rect x="134" y="247" width="17" height="8" rx="1" fill="#4a7ebb"/><path d="M144.5,253.5 h8 v3" fill="none" stroke="#f8f8f8" stroke-width="3"/><path d="M145.5,256.2 h5" stroke="#666" stroke-width="1.6"/><path d="M149,253 l4,3.2 l-4,3.2 z" fill="#666"/>
<rect x="134" y="275" width="17" height="8" rx="1" fill="#4a7ebb"/><path d="M144.5,281.5 h8 v3" fill="none" stroke="#f8f8f8" stroke-width="3"/><path d="M145.5,284.2 h5" stroke="#666" stroke-width="1.6"/><path d="M149,281 l4,3.2 l-4,3.2 z" fill="#666"/>
<rect x="134" y="303" width="17" height="8" rx="1" fill="#4a7ebb"/><path d="M144.5,309.5 h8 v3" fill="none" stroke="#f8f8f8" stroke-width="3"/><path d="M145.5,312.2 h5" stroke="#666" stroke-width="1.6"/><path d="M149,309 l4,3.2 l-4,3.2 z" fill="#666"/>
<rect x="134" y="331" width="17" height="8" rx="1" fill="#4a7ebb"/><path d="M144.5,337.5 h8 v3" fill="none" stroke="#f8f8f8" stroke-width="3"/><path d="M145.5,340.2 h5" stroke="#666" stroke-width="1.6"/><path d="M149,337 l4,3.2 l-4,3.2 z" fill="#666"/>
<rect x="134" y="359" width="17" height="8" rx="1" fill="#4a7ebb"/><path d="M144.5,365.5 h8 v3" fill="none" stroke="#f8f8f8" stroke-width="3"/><path d="M145.5,368.2 h5" stroke="#666" stroke-width="1.6"/><path d="M149,365 l4,3.2 l-4,3.2 z" fill="#666"/>
<rect x="134" y="387" width="17" height="8" rx="1" fill="#4a7ebb"/><path d="M144.5,393.5 h8 v3" fill="none" stroke="#f8f8f8" stroke-width="3"/><path d="M145.5,396.2 h5" stroke="#666" stroke-width="1.6"/><path d="M149,393 l4,3.2 l-4,3.2 z" fill="#666"/>
<rect x="134" y="415" width="17" height="8" rx="1" fill="#4a7ebb"/><path d="M144.5,421.5 h8 v3" fill="none" stroke="#f8f8f8" stroke-width="3"/><path d="M145.5,424.2 h5" stroke="#666" stroke-width="1.6"/><path d="M149,421 l4,3.2 l-4,3.2 z" fill="#666"/>
<rect x="134" y="443" width="17" height="8" rx="1" fill="#4a7ebb"/><path d="M144.5,449.5 h8 v3" fill="none" stroke="#f8f8f8" stroke-width="3"/><path d="M145.5,452.2 h5" stroke="#666" stroke-width="1.6"/><path d="M149,449 l4,3.2 l-4,3.2 z" fill="#666"/>
<rect x="134" y="471" width="17" height="8" rx="1" fill="#4a7ebb"/><path d="M144.5,477.5 h8 v3" fill="none" stroke="#f8f8f8" stroke-width="3"/><path d="M145.5,480.2 h5" stroke="#666" stroke-width="1.6"/><path d="M149,477 l4,3.2 l-4,3.2 z" fill="#666"/>
<rect x="134" y="499" width="17" height="8" rx="1" fill="#4a7ebb"/><path d="M144.5,505.5 h8 v3" fill="none" stroke="#f8f8f8" stroke-width="3"/><path d="M145.5,508.2 h5" stroke="#666" stroke-width="1.6"/><path d="M149,505 l4,3.2 l-4,3.2 z" fill="#666"/>
<rect x="134" y="527" width="17" height="8" rx="1" fill="#4a7ebb"/><path d="M144.5,533.5 h8 v3" fill="none" stroke="#f8f8f8" stroke-width="3"/><path d="M145.5,536.2 h5" stroke="#666" stroke-width="1.6"/><path d="M149,533 l4,3.2 l-4,3.2 z" fill="#666"/>
<rect x="134" y="555" width="17" height="8" rx="1" fill="#4a7ebb"/><path d="M144.5,561.5 h8 v3" fill="none" stroke="#f8f8f8" stroke-width="3"/><path d="M145.5,564.2 h5" stroke="#666" stroke-width="1.6"/><path d="M149,561 l4,3.2 l-4,3.2 z" fill="#666"/>
<rect x="134" y="583" width="17" height="8" rx="1" fill="#4a7ebb"/><path d="M144.5,589.5 h8 v3" fill="none" stroke="#f8f8f8" stroke-width="3"/><path d="M145.5,592.2 h5" stroke="#666" stroke-width="1.6"/><path d="M149,589 l4,3.2 l-4,3.2 z" fill="#666"/>
<rect x="134" y="611" width="17" height="8" rx="1" fill="#4a7ebb"/><path d="M144.5,617.5 h8 v3" fill="none" stroke="#f8f8f8" stroke-width="3"/><path d="M145.5,620.2 h5" stroke="#666" stroke-width="1.6"/><path d="M149,617 l4,3.2 l-4,3.2 z" fill="#666"/>
<path d="M209.3,284.6 h5.8 v-5.8 z" fill="#404040"/>
<path d="M209.3,396.6 h5.8 v-5.8 z" fill="#404040"/>
<path d="M209.3,480.6 h5.8 v-5.8 z" fill="#404040"/>
<g shape-rendering="crispEdges">
<line x1="1044.5" y1="242" x2="1044.5" y2="698" stroke="#8a8a8a" stroke-width="1" stroke-dasharray="1,2.33"/>
<line x1="1605.5" y1="242" x2="1605.5" y2="698" stroke="#8a8a8a" stroke-width="1" stroke-dasharray="1,2.33"/>
<line x1="130" y1="269.5" x2="994" y2="269.5" stroke="#7a7a7a" stroke-width="1" /><line x1="999" y1="269.5" x2="1644" y2="269.5" stroke="#7a7a7a" stroke-width="1" />
<rect x="1045" y="306" width="46" height="11" fill="#8ab8ea" />
<rect x="1109" y="334" width="46" height="11" fill="#8ab8ea" />
<rect x="1174" y="362" width="46" height="11" fill="#8ab8ea" />
<rect x="1238" y="418" width="46" height="11" fill="#8ab8ea" />
<rect x="1303" y="446" width="46" height="11" fill="#8ab8ea" />
<rect x="1367" y="502" width="46" height="11" fill="#8ab8ea" />
<rect x="1431" y="530" width="46" height="11" fill="#8ab8ea" />
<rect x="1496" y="558" width="46" height="11" fill="#8ab8ea" />
<rect x="1560" y="586" width="45" height="11" fill="#8ab8ea" />
<rect x="1044" y="278" width="177" height="2" fill="#444" />
<rect x="1042.5" y="278.5" width="3" height="11" fill="#fff" stroke="#999"/>
<rect x="1218" y="278" width="3" height="11" fill="#555" />
<rect x="1237" y="390" width="113" height="2" fill="#444" />
<rect x="1236" y="390" width="3" height="11" fill="#555" />
<rect x="1347" y="390" width="3" height="11" fill="#555" />
<rect x="1366" y="474" width="241" height="2" fill="#444" />
<rect x="1365" y="474" width="3" height="11" fill="#555" />
<rect x="1604.5" y="474.5" width="3" height="11" fill="#fff" stroke="#999"/>
</g>
<path d="M1091,311.5 H1108.5 V330" fill="none" stroke="#2b78d0" stroke-width="1" shape-rendering="crispEdges"/>
<path d="M1104.0,329.5 h9 l-4.5,4.5 z" fill="#2b78d0"/>
<path d="M1155,339.5 H1173.5 V358" fill="none" stroke="#2b78d0" stroke-width="1" shape-rendering="crispEdges"/>
<path d="M1169.0,357.5 h9 l-4.5,4.5 z" fill="#2b78d0"/>
<path d="M1220,367.5 H1237.5 V414" fill="none" stroke="#2b78d0" stroke-width="1" shape-rendering="crispEdges"/>
<path d="M1233.0,413.5 h9 l-4.5,4.5 z" fill="#2b78d0"/>
<path d="M1284,423.5 H1302.5 V442" fill="none" stroke="#2b78d0" stroke-width="1" shape-rendering="crispEdges"/>
<path d="M1298.0,441.5 h9 l-4.5,4.5 z" fill="#2b78d0"/>
<path d="M1349,451.5 H1366.5 V498" fill="none" stroke="#2b78d0" stroke-width="1" shape-rendering="crispEdges"/>
<path d="M1362.0,497.5 h9 l-4.5,4.5 z" fill="#2b78d0"/>
<path d="M1413,507.5 H1430.5 V526" fill="none" stroke="#2b78d0" stroke-width="1" shape-rendering="crispEdges"/>
<path d="M1426.0,525.5 h9 l-4.5,4.5 z" fill="#2b78d0"/>
<path d="M1477,535.5 H1495.5 V554" fill="none" stroke="#2b78d0" stroke-width="1" shape-rendering="crispEdges"/>
<path d="M1491.0,553.5 h9 l-4.5,4.5 z" fill="#2b78d0"/>
<path d="M1542,563.5 H1559.5 V582" fill="none" stroke="#2b78d0" stroke-width="1" shape-rendering="crispEdges"/>
<path d="M1555.0,581.5 h9 l-4.5,4.5 z" fill="#2b78d0"/>
<path d="M1605.5,592 q4,0 4,4 V610" fill="none" stroke="#2b78d0" stroke-width="1"/>
<path d="M1605,609.5 h9 l-4.5,4.5 z" fill="#2b78d0"/>
<path d="M1048.5,256 V302" stroke="#222" stroke-width="1" shape-rendering="crispEdges"/><path d="M1044,301.5 h9 l-4.5,4.5 z" fill="#111"/>
<path d="M1039.0,255.5 l5.5,-5 l5.5,5 l-5.5,5 z" fill="#666"/>
<line x1="1044.5" y1="250.5" x2="1044.5" y2="260.5" stroke="#ddd" stroke-width="1" stroke-dasharray="1,1" shape-rendering="crispEdges"/>
<path d="M1600.0,619.5 l5.5,-5 l5.5,5 l-5.5,5 z" fill="#666"/>
<line x1="1605.5" y1="614.5" x2="1605.5" y2="624.5" stroke="#ddd" stroke-width="1" stroke-dasharray="1,1" shape-rendering="crispEdges"/>
</svg>
<span class="t" id="t0" style="left:18.7px;top:3.8px;font-size:15px;color:#fff;letter-spacing:0.082px;">Datei</span>
<span class="t" id="t1" style="left:88.4px;top:4.8px;font-size:15px;color:#fff;letter-spacing:0.125px;">Vorgang</span>
<span class="t" id="t2" style="left:174.7px;top:4.8px;font-size:15px;color:#fff;letter-spacing:-0.706px;">Ressource</span>
<span class="t" id="t3" style="left:269.7px;top:4.8px;font-size:15px;color:#fff;letter-spacing:-0.183px;">Bericht</span>
<span class="t" id="t4" style="left:344.4px;top:4.8px;font-size:15px;color:#fff;letter-spacing:-0.106px;">Projekt</span>
<span class="t" id="t5" style="left:419.4px;top:4.8px;font-size:15px;color:#31752f;letter-spacing:-0.139px;">Ansicht</span>
<span class="t" id="t6" style="left:530.4px;top:4.8px;font-size:15px;color:#fff;letter-spacing:-0.094px;">Format</span>
<span class="t" id="t7" style="left:660.1px;top:4.8px;font-size:15px;color:#d9e6d8;letter-spacing:-0.280px;">Was möchten Sie tun?</span>
<span class="t" id="t8" style="left:25.4px;top:81.8px;font-size:15px;color:#444;letter-spacing:-0.125px;">Gantt-</span>
<span class="t" id="t9" style="left:6.3px;top:102.0px;font-size:15px;color:#444;letter-spacing:0.055px;">Diagramm</span>
<span class="t" id="t10" style="left:93.1px;top:81.8px;font-size:15px;color:#444;letter-spacing:-0.221px;">Arbeitsauslastung</span>
<span class="t" id="t11" style="left:92.2px;top:102.0px;font-size:15px;color:#444;letter-spacing:-0.197px;">nach Vorgängen</span>
<span class="t" id="t12" style="left:264.0px;top:81.8px;font-size:15px;color:#444;letter-spacing:-0.052px;">Teamplaner</span>
<span class="t" id="t13" style="left:347.7px;top:81.8px;font-size:15px;color:#444;letter-spacing:-0.438px;">Ressourcenplan</span>
<span class="t" id="t14" style="left:1435.9px;top:81.8px;font-size:15px;color:#444;letter-spacing:-0.635px;">Neues</span>
<span class="t" id="t15" style="left:1432.7px;top:102.0px;font-size:15px;color:#444;letter-spacing:-0.640px;">Fenster</span>
<span class="t" id="t16" style="left:1531.4px;top:81.8px;font-size:15px;color:#444;letter-spacing:-0.216px;">Makros</span>
<span class="t" id="t17" style="left:480.0px;top:39.8px;font-size:15px;color:#444;letter-spacing:-0.636px;">Ressource: Einsatz</span>
<span class="t" id="t18" style="left:480.0px;top:67.0px;font-size:15px;color:#444;letter-spacing:-0.360px;">Ressource: Tabelle</span>
<span class="t" id="t19" style="left:480.0px;top:94.0px;font-size:15px;color:#444;letter-spacing:-0.154px;">Andere Ansichten</span>
<span class="t" id="t20" style="left:657.9px;top:39.8px;font-size:15px;color:#444;letter-spacing:-0.185px;">Sortieren</span>
<span class="t" id="t21" style="left:657.9px;top:67.0px;font-size:15px;color:#444;letter-spacing:-0.136px;">Gliederung</span>
<span class="t" id="t22" style="left:657.9px;top:94.0px;font-size:15px;color:#444;letter-spacing:0.041px;">Tabellen</span>
<span class="t" id="t23" style="left:777.6px;top:39.8px;font-size:15px;color:#444;letter-spacing:-0.279px;">[Keine Hervorh</span>
<span class="t" id="t24" style="left:777.6px;top:67.0px;font-size:15px;color:#444;letter-spacing:-0.165px;">[Kein Filter]</span>
<span class="t" id="t25" style="left:777.6px;top:94.0px;font-size:15px;color:#444;letter-spacing:-0.275px;">[Ohne Gruppe]</span>
<span class="t" id="t26" style="left:898.8px;top:39.8px;font-size:15px;color:#444;letter-spacing:-0.274px;">Zeitskala:</span>
<span class="t" id="t27" style="left:902.7px;top:67.0px;font-size:15px;color:#444;letter-spacing:-0.001px;">[5] Tage</span>
<span class="t" id="t28" style="left:1040.8px;top:39.8px;font-size:15px;color:#444;letter-spacing:0.245px;">Zoom</span>
<span class="t" id="t29" style="left:1040.8px;top:67.0px;font-size:15px;color:#444;letter-spacing:-0.375px;">Gesamtes Projekt</span>
<span class="t" id="t30" style="left:1040.8px;top:94.0px;font-size:15px;color:#444;letter-spacing:-0.051px;">Ausgewählte Vorgänge</span>
<span class="t" id="t31" style="left:1235.8px;top:39.8px;font-size:15px;color:#444;letter-spacing:-0.335px;">Zeitachse</span>
<span class="t" id="t32" style="left:1235.8px;top:67.0px;font-size:15px;color:#444;letter-spacing:-0.040px;">Details</span>
<span class="t" id="t33" style="left:73.0px;top:124.7px;font-size:12.5px;color:#666;letter-spacing:0.222px;">Vorgangsansichten</span>
<span class="t" id="t34" style="left:381.7px;top:124.7px;font-size:12.5px;color:#666;letter-spacing:0.010px;">Ressourcenansichten</span>
<span class="t" id="t35" style="left:744.1px;top:124.7px;font-size:12.5px;color:#666;letter-spacing:-0.080px;">Daten</span>
<span class="t" id="t36" style="left:1032.7px;top:124.7px;font-size:12.5px;color:#666;letter-spacing:0.413px;">Zoom</span>
<span class="t" id="t37" style="left:1261.4px;top:124.7px;font-size:12.5px;color:#666;letter-spacing:0.089px;">Elemente anzeigen</span>
<span class="t" id="t38" style="left:1454.8px;top:124.7px;font-size:12.5px;color:#666;letter-spacing:-0.168px;">Fenster</span>
<span class="t" id="t39" style="left:1533.7px;top:124.7px;font-size:12.5px;color:#666;letter-spacing:0.494px;">Makros</span>
<span class="t" id="t40" style="left:135.2px;top:218.8px;font-size:15px;color:#6b6b6b;letter-spacing:-0.154px;">Vorgan</span>
<span class="t" id="t41" style="left:210.1px;top:218.8px;font-size:15px;color:#6b6b6b;letter-spacing:-0.183px;">Vorgangsname</span>
<span class="t" id="t42" style="left:397.1px;top:218.8px;font-size:15px;color:#6b6b6b;letter-spacing:-0.369px;">Dauer</span>
<span class="t" id="t43" style="left:504.0px;top:218.8px;font-size:15px;color:#6b6b6b;letter-spacing:-0.209px;">Anfang</span>
<span class="t" id="t44" style="left:610.9px;top:218.8px;font-size:15px;color:#6b6b6b;letter-spacing:-0.928px;">Ende</span>
<span class="t" id="t45" style="left:717.6px;top:218.8px;font-size:15px;color:#6b6b6b;letter-spacing:0.008px;">Vorgänger</span>
<span class="t" id="t46" style="left:857.3px;top:218.8px;font-size:15px;color:#6b6b6b;letter-spacing:-0.518px;width:113.2px;overflow:hidden;">Ressourcennamen</span>
<span class="t" id="t47" style="left:1049.9px;top:198.7px;font-size:12.5px;color:#6b6b6b;letter-spacing:0.085px;">August 2016</span>
<span class="t" id="t48" style="left:1334.4px;top:198.7px;font-size:12.5px;color:#6b6b6b;letter-spacing:0.227px;">September 2016</span>
<span class="t" id="t49" style="left:1610.9px;top:198.7px;font-size:12.5px;color:#6b6b6b;letter-spacing:0.152px;width:33.1px;overflow:hidden;">Oktober 2016</span>
<span class="t" id="t50" style="left:1013.8px;top:218.7px;font-size:12.5px;color:#6b6b6b;">27</span>
<span class="t" id="t51" style="left:1059.8px;top:218.7px;font-size:12.5px;color:#6b6b6b;">01</span>
<span class="t" id="t52" style="left:1105.8px;top:218.7px;font-size:12.5px;color:#6b6b6b;">06</span>
<span class="t" id="t53" style="left:1152.3px;top:218.7px;font-size:12.5px;color:#6b6b6b;">11</span>
<span class="t" id="t54" style="left:1197.8px;top:218.7px;font-size:12.5px;color:#6b6b6b;">16</span>
<span class="t" id="t55" style="left:1243.8px;top:218.7px;font-size:12.5px;color:#6b6b6b;">21</span>
<span class="t" id="t56" style="left:1289.8px;top:218.7px;font-size:12.5px;color:#6b6b6b;">26</span>
<span class="t" id="t57" style="left:1335.8px;top:218.7px;font-size:12.5px;color:#6b6b6b;">31</span>
<span class="t" id="t58" style="left:1381.8px;top:218.7px;font-size:12.5px;color:#6b6b6b;">05</span>
<span class="t" id="t59" style="left:1427.8px;top:218.7px;font-size:12.5px;color:#6b6b6b;">10</span>
<span class="t" id="t60" style="left:1473.8px;top:218.7px;font-size:12.5px;color:#6b6b6b;">15</span>
<span class="t" id="t61" style="left:1519.8px;top:218.7px;font-size:12.5px;color:#6b6b6b;">20</span>
<span class="t" id="t62" style="left:1565.8px;top:218.7px;font-size:12.5px;color:#6b6b6b;">25</span>
<span class="t" id="t63" style="left:1611.8px;top:218.7px;font-size:12.5px;color:#6b6b6b;">30</span>
<span class="t" id="t64" style="left:50.8px;top:244.0px;font-size:15px;color:#2f6e2d;font-weight:700;">1</span>
<span class="t" id="t65" style="left:221.5px;top:245.1px;font-size:16px;color:#000;letter-spacing:0.363px;">Projektstart</span>
<span class="t" id="t66" style="left:394.2px;top:245.1px;font-size:16px;color:#000;letter-spacing:0.321px;">0 t</span>
<span class="t" id="t67" style="left:501.1px;top:245.1px;font-size:16px;color:#000;letter-spacing:0.176px;">01.08.16</span>
<span class="t" id="t68" style="left:608.4px;top:245.1px;font-size:16px;color:#000;letter-spacing:0.096px;">01.08.16</span>
<span class="t" id="t69" style="left:50.8px;top:272.0px;font-size:15px;color:#666;">2</span>
<span class="t" id="t70" style="left:221.5px;top:273.1px;font-size:16px;color:#000;font-weight:700;letter-spacing:-0.582px;">Phase 1</span>
<span class="t" id="t71" style="left:394.2px;top:273.1px;font-size:16px;color:#000;font-weight:700;letter-spacing:0.063px;">15 t</span>
<span class="t" id="t72" style="left:501.1px;top:273.1px;font-size:16px;color:#000;font-weight:700;letter-spacing:0.176px;">01.08.16</span>
<span class="t" id="t73" style="left:608.4px;top:273.1px;font-size:16px;color:#000;font-weight:700;letter-spacing:0.096px;">19.08.16</span>
<span class="t" id="t74" style="left:50.8px;top:300.0px;font-size:15px;color:#666;">3</span>
<span class="t" id="t75" style="left:237.5px;top:301.1px;font-size:16px;color:#000;letter-spacing:-0.194px;">Vorgang 1</span>
<span class="t" id="t76" style="left:394.2px;top:301.1px;font-size:16px;color:#000;letter-spacing:0.321px;">5 t</span>
<span class="t" id="t77" style="left:501.1px;top:301.1px;font-size:16px;color:#000;letter-spacing:0.176px;">01.08.16</span>
<span class="t" id="t78" style="left:608.4px;top:301.1px;font-size:16px;color:#000;letter-spacing:0.096px;">05.08.16</span>
<span class="t" id="t79" style="left:715.2px;top:301.1px;font-size:16px;color:#000;">1</span>
<span class="t" id="t80" style="left:854.3px;top:301.1px;font-size:16px;color:#000;letter-spacing:0.119px;">IT HW MA1[30%]</span>
<span class="t" id="t81" style="left:50.8px;top:328.0px;font-size:15px;color:#666;">4</span>
<span class="t" id="t82" style="left:237.5px;top:329.1px;font-size:16px;color:#000;letter-spacing:-0.194px;">Vorgang 2</span>
<span class="t" id="t83" style="left:394.2px;top:329.1px;font-size:16px;color:#000;letter-spacing:0.321px;">5 t</span>
<span class="t" id="t84" style="left:501.1px;top:329.1px;font-size:16px;color:#000;letter-spacing:0.176px;">08.08.16</span>
<span class="t" id="t85" style="left:608.4px;top:329.1px;font-size:16px;color:#000;letter-spacing:0.096px;">12.08.16</span>
<span class="t" id="t86" style="left:715.2px;top:329.1px;font-size:16px;color:#000;">3</span>
<span class="t" id="t87" style="left:854.3px;top:329.1px;font-size:16px;color:#000;letter-spacing:0.119px;">IT HW MA1[30%]</span>
<span class="t" id="t88" style="left:50.8px;top:356.0px;font-size:15px;color:#666;">5</span>
<span class="t" id="t89" style="left:237.5px;top:357.1px;font-size:16px;color:#000;letter-spacing:-0.194px;">Vorgang 3</span>
<span class="t" id="t90" style="left:394.2px;top:357.1px;font-size:16px;color:#000;letter-spacing:0.321px;">5 t</span>
<span class="t" id="t91" style="left:501.1px;top:357.1px;font-size:16px;color:#000;letter-spacing:0.176px;">15.08.16</span>
<span class="t" id="t92" style="left:608.4px;top:357.1px;font-size:16px;color:#000;letter-spacing:0.096px;">19.08.16</span>
<span class="t" id="t93" style="left:715.2px;top:357.1px;font-size:16px;color:#000;">4</span>
<span class="t" id="t94" style="left:854.3px;top:357.1px;font-size:16px;color:#000;letter-spacing:0.119px;">IT HW MA1[30%]</span>
<span class="t" id="t95" style="left:50.8px;top:384.0px;font-size:15px;color:#666;">6</span>
<span class="t" id="t96" style="left:221.5px;top:385.1px;font-size:16px;color:#000;font-weight:700;letter-spacing:-0.582px;">Phase 2</span>
<span class="t" id="t97" style="left:394.2px;top:385.1px;font-size:16px;color:#000;font-weight:700;letter-spacing:0.063px;">10 t</span>
<span class="t" id="t98" style="left:501.1px;top:385.1px;font-size:16px;color:#000;font-weight:700;letter-spacing:0.176px;">22.08.16</span>
<span class="t" id="t99" style="left:608.4px;top:385.1px;font-size:16px;color:#000;font-weight:700;letter-spacing:0.096px;">02.09.16</span>
<span class="t" id="t100" style="left:50.8px;top:412.0px;font-size:15px;color:#666;">7</span>
<span class="t" id="t101" style="left:237.5px;top:413.1px;font-size:16px;color:#000;letter-spacing:-0.194px;">Vorgang 4</span>
<span class="t" id="t102" style="left:394.2px;top:413.1px;font-size:16px;color:#000;letter-spacing:0.321px;">5 t</span>
<span class="t" id="t103" style="left:501.1px;top:413.1px;font-size:16px;color:#000;letter-spacing:0.176px;">22.08.16</span>
<span class="t" id="t104" style="left:608.4px;top:413.1px;font-size:16px;color:#000;letter-spacing:0.096px;">26.08.16</span>
<span class="t" id="t105" style="left:715.2px;top:413.1px;font-size:16px;color:#000;">5</span>
<span class="t" id="t106" style="left:854.3px;top:413.1px;font-size:16px;color:#000;letter-spacing:0.119px;">IT HW MA1[30%]</span>
<span class="t" id="t107" style="left:50.8px;top:440.0px;font-size:15px;color:#666;">8</span>
<span class="t" id="t108" style="left:237.5px;top:441.1px;font-size:16px;color:#000;letter-spacing:-0.194px;">Vorgang 5</span>
<span class="t" id="t109" style="left:394.2px;top:441.1px;font-size:16px;color:#000;letter-spacing:0.321px;">5 t</span>
<span class="t" id="t110" style="left:501.1px;top:441.1px;font-size:16px;color:#000;letter-spacing:0.176px;">29.08.16</span>
<span class="t" id="t111" style="left:608.4px;top:441.1px;font-size:16px;color:#000;letter-spacing:0.096px;">02.09.16</span>
<span class="t" id="t112" style="left:715.2px;top:441.1px;font-size:16px;color:#000;">7</span>
<span class="t" id="t113" style="left:854.3px;top:441.1px;font-size:16px;color:#000;letter-spacing:0.119px;">IT HW MA1[30%]</span>
<span class="t" id="t114" style="left:50.8px;top:468.0px;font-size:15px;color:#666;">9</span>
<span class="t" id="t115" style="left:221.5px;top:469.1px;font-size:16px;color:#000;font-weight:700;letter-spacing:-0.582px;">Phase 3</span>
<span class="t" id="t116" style="left:394.2px;top:469.1px;font-size:16px;color:#000;font-weight:700;letter-spacing:0.063px;">20 t</span>
<span class="t" id="t117" style="left:501.1px;top:469.1px;font-size:16px;color:#000;font-weight:700;letter-spacing:0.176px;">05.09.16</span>
<span class="t" id="t118" style="left:608.4px;top:469.1px;font-size:16px;color:#000;font-weight:700;letter-spacing:0.096px;">30.09.16</span>
<span class="t" id="t119" style="left:46.7px;top:496.0px;font-size:15px;color:#666;">10</span>
<span class="t" id="t120" style="left:237.5px;top:497.1px;font-size:16px;color:#000;letter-spacing:-0.194px;">Vorgang 6</span>
<span class="t" id="t121" style="left:394.2px;top:497.1px;font-size:16px;color:#000;letter-spacing:0.321px;">5 t</span>
<span class="t" id="t122" style="left:501.1px;top:497.1px;font-size:16px;color:#000;letter-spacing:0.176px;">05.09.16</span>
<span class="t" id="t123" style="left:608.4px;top:497.1px;font-size:16px;color:#000;letter-spacing:0.096px;">09.09.16</span>
<span class="t" id="t124" style="left:715.2px;top:497.1px;font-size:16px;color:#000;">8</span>
<span class="t" id="t125" style="left:854.3px;top:497.1px;font-size:16px;color:#000;letter-spacing:0.119px;">IT HW MA2[60%]</span>
<span class="t" id="t126" style="left:47.2px;top:524.0px;font-size:15px;color:#666;">11</span>
<span class="t" id="t127" style="left:237.5px;top:525.1px;font-size:16px;color:#000;letter-spacing:-0.194px;">Vorgang 7</span>
<span class="t" id="t128" style="left:394.2px;top:525.1px;font-size:16px;color:#000;letter-spacing:0.321px;">5 t</span>
<span class="t" id="t129" style="left:501.1px;top:525.1px;font-size:16px;color:#000;letter-spacing:0.176px;">12.09.16</span>
<span class="t" id="t130" style="left:608.4px;top:525.1px;font-size:16px;color:#000;letter-spacing:0.096px;">16.09.16</span>
<span class="t" id="t131" style="left:714.9px;top:525.1px;font-size:16px;color:#000;">10</span>
<span class="t" id="t132" style="left:854.3px;top:525.1px;font-size:16px;color:#000;letter-spacing:0.119px;">IT HW MA2[60%]</span>
<span class="t" id="t133" style="left:46.7px;top:552.0px;font-size:15px;color:#666;">12</span>
<span class="t" id="t134" style="left:237.5px;top:553.1px;font-size:16px;color:#000;letter-spacing:-0.194px;">Vorgang 8</span>
<span class="t" id="t135" style="left:394.2px;top:553.1px;font-size:16px;color:#000;letter-spacing:0.321px;">5 t</span>
<span class="t" id="t136" style="left:501.1px;top:553.1px;font-size:16px;color:#000;letter-spacing:0.176px;">19.09.16</span>
<span class="t" id="t137" style="left:608.4px;top:553.1px;font-size:16px;color:#000;letter-spacing:0.096px;">23.09.16</span>
<span class="t" id="t138" style="left:715.5px;top:553.1px;font-size:16px;color:#000;">11</span>
<span class="t" id="t139" style="left:854.3px;top:553.1px;font-size:16px;color:#000;letter-spacing:0.119px;">IT HW MA2[60%]</span>
<span class="t" id="t140" style="left:46.7px;top:580.0px;font-size:15px;color:#666;">13</span>
<span class="t" id="t141" style="left:237.5px;top:581.1px;font-size:16px;color:#000;letter-spacing:-0.194px;">Vorgang 9</span>
<span class="t" id="t142" style="left:394.2px;top:581.1px;font-size:16px;color:#000;letter-spacing:0.321px;">5 t</span>
<span class="t" id="t143" style="left:501.1px;top:581.1px;font-size:16px;color:#000;letter-spacing:0.176px;">26.09.16</span>
<span class="t" id="t144" style="left:608.4px;top:581.1px;font-size:16px;color:#000;letter-spacing:0.096px;">30.09.16</span>
<span class="t" id="t145" style="left:714.9px;top:581.1px;font-size:16px;color:#000;">12</span>
<span class="t" id="t146" style="left:854.3px;top:581.1px;font-size:16px;color:#000;letter-spacing:0.119px;">IT HW MA2[60%]</span>
<span class="t" id="t147" style="left:46.7px;top:608.0px;font-size:15px;color:#666;">14</span>
<span class="t" id="t148" style="left:221.5px;top:609.1px;font-size:16px;color:#000;letter-spacing:0.134px;">Projektende</span>
<span class="t" id="t149" style="left:394.2px;top:609.1px;font-size:16px;color:#000;letter-spacing:0.321px;">0 t</span>
<span class="t" id="t150" style="left:501.1px;top:609.1px;font-size:16px;color:#000;letter-spacing:0.176px;">30.09.16</span>
<span class="t" id="t151" style="left:608.4px;top:609.1px;font-size:16px;color:#000;letter-spacing:0.096px;">30.09.16</span>
<span class="t" id="t152" style="left:714.9px;top:609.1px;font-size:16px;color:#000;">13</span>
<span class="t" id="t153" style="left:1098.3px;top:298.1px;font-size:17px;color:#000;font-weight:700;letter-spacing:0.383px;width:545.7px;overflow:hidden;">IT HW MA1[30%]</span>
<span class="t" id="t154" style="left:1162.7px;top:326.1px;font-size:17px;color:#000;font-weight:700;letter-spacing:0.383px;width:481.3px;overflow:hidden;">IT HW MA1[30%]</span>
<span class="t" id="t155" style="left:1227.1px;top:354.1px;font-size:17px;color:#000;font-weight:700;letter-spacing:0.383px;width:416.9px;overflow:hidden;">IT HW MA1[30%]</span>
<span class="t" id="t156" style="left:1291.5px;top:410.1px;font-size:17px;color:#000;font-weight:700;letter-spacing:0.383px;width:352.5px;overflow:hidden;">IT HW MA1[30%]</span>
<span class="t" id="t157" style="left:1355.9px;top:438.1px;font-size:17px;color:#000;font-weight:700;letter-spacing:0.383px;width:288.1px;overflow:hidden;">IT HW MA1[30%]</span>
<span class="t" id="t158" style="left:1420.3px;top:494.1px;font-size:17px;color:#000;font-weight:700;letter-spacing:0.383px;width:223.7px;overflow:hidden;">IT HW MA2[60%]</span>
<span class="t" id="t159" style="left:1484.7px;top:522.1px;font-size:17px;color:#000;font-weight:700;letter-spacing:0.383px;width:159.3px;overflow:hidden;">IT HW MA2[60%]</span>
<span class="t" id="t160" style="left:1549.1px;top:550.1px;font-size:17px;color:#000;font-weight:700;letter-spacing:0.237px;">IT HW MA2</span>
<span class="t" id="t161" style="left:1613.5px;top:578.1px;font-size:17px;color:#000;font-weight:700;letter-spacing:0.383px;width:30.5px;overflow:hidden;">IT HW MA2[60%]</span>
<span class="t" id="t162" style="left:1057.4px;top:241.6px;font-size:17px;color:#000;font-weight:700;letter-spacing:0.390px;">01.08</span>
<span class="t" id="t163" style="left:1619.2px;top:605.6px;font-size:17px;color:#000;font-weight:700;letter-spacing:0.390px;width:24.8px;overflow:hidden;">30.09</span>
</body></html>
